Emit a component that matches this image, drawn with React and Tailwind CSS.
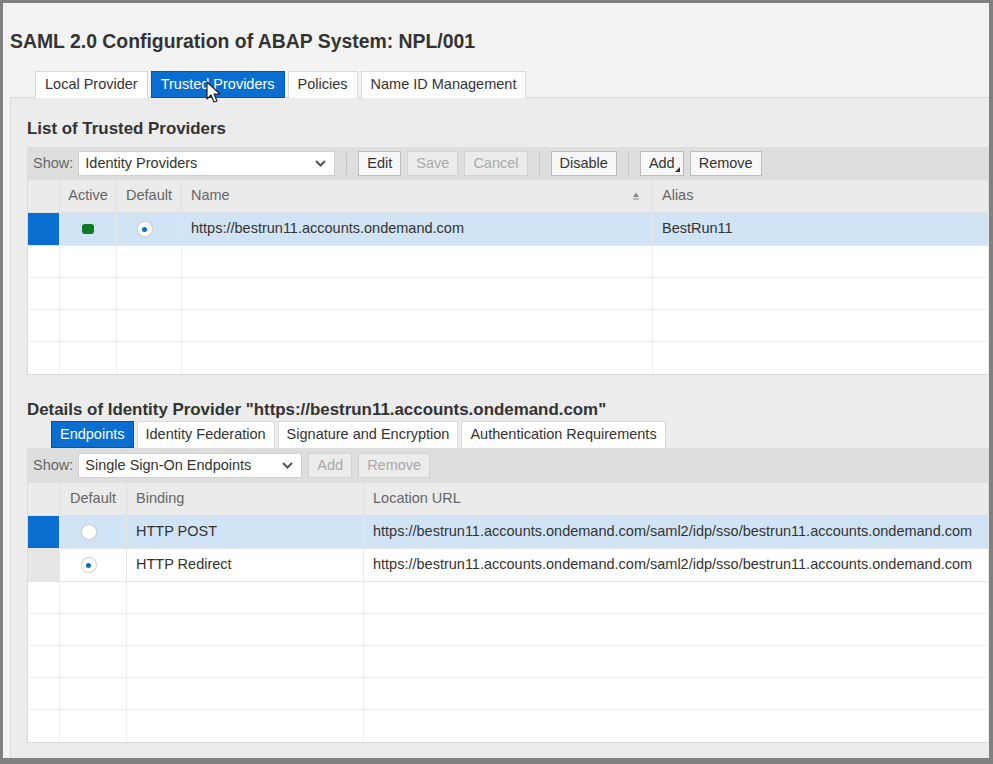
import React from "react"

const font = { fontFamily: '"Liberation Sans", Arial, sans-serif' }

function Tab({ label, active, pad = "px-[9px]" }) {
  return (
    <div
      className={`h-[27px] ${pad} flex items-center border text-[14.5px] ${active ? "bg-[#0a6ed1] border-[#0854a0] text-white" : "bg-white border-[#d9d9d9] border-b-0 text-[#333]"}`}
    >
      {label}
    </div>
  )
}

function Btn({ label, disabled, menu }) {
  return (
    <div
      className={`relative h-[25px] px-[8px] flex items-center border text-[14.5px] ${disabled ? "bg-[#ececec] border-[#d3d3d3] text-[#a9a9a9]" : "bg-[#f7f7f7] border-[#bdbdbd] text-[#333]"}`}
    >
      {label}
      {menu && (
        <svg className="absolute right-[3px] bottom-[3px]" width="5" height="5" viewBox="0 0 5 5">
          <path d="M5 0 L5 5 L0 5 Z" fill="#333" />
        </svg>
      )}
    </div>
  )
}

function Sep() {
  return <div className="w-px h-[22px] bg-[#c4c4c4] mx-[5px]" />
}

function Select({ label, width }) {
  return (
    <div className={`h-[25px] bg-white border border-[#cfcfcf] flex items-center justify-between pl-[6px] pr-[8px] text-[14.5px] text-[#333] ${width}`}>
      <span>{label}</span>
      <svg width="11" height="7" viewBox="0 0 11 7">
        <path d="M1 1 L5.5 5.5 L10 1" fill="none" stroke="#555" strokeWidth="2" />
      </svg>
    </div>
  )
}

function Radio({ checked }) {
  return (
    <div className="w-[16px] h-[16px] rounded-full bg-white border border-[#d6d6d6] flex items-center justify-center shadow-[0_0_1px_rgba(0,0,0,0.15)]">
      {checked && <div className="w-[5px] h-[5px] rounded-full bg-[#0a6ed1]" />}
    </div>
  )
}

function Active() {
  return <div className="w-[12px] h-[10px] rounded-[3px] bg-[#0b7a22]" />
}

function SortIcon() {
  return (
    <svg width="8" height="8" viewBox="0 0 8 8">
      <path d="M4 0.5 L7 5 L1 5 Z" fill="#8a8a8a" />
      <rect x="1" y="6.5" width="6" height="1" fill="#8a8a8a" />
    </svg>
  )
}

function Table({ cols, rows, total }) {
  const blanks = Array.from({ length: total - rows.length })
  return (
    <div className="bg-white border-l border-b border-[#dcdcdc]">
      <div className="flex h-[33px] bg-[#ebebeb] border-b border-[#dedede] text-[14.5px] text-[#666]">
        <div className="w-[32px] shrink-0 border-r border-[#dedede]" />
        {cols.map((c, i) => (
          <div
            key={i}
            className={`${c.w} h-full flex items-center border-r border-[#dedede] ${c.center ? "justify-center" : "pl-[9px] pr-[12px] justify-between"}`}
          >
            <span>{c.label}</span>
            {c.sort && <SortIcon />}
          </div>
        ))}
      </div>
      {rows.map((r, i) => (
        <div key={i} className={`flex h-[33px] border-b border-[#e6e6e6] text-[14.5px] text-[#333] ${r.selected ? "bg-[#d1e4f6]" : "bg-white"}`}>
          <div className={`w-[32px] shrink-0 border-r border-[#e6e6e6] ${r.selected ? "bg-[#0a6ed1]" : "bg-[#e6e6e6]"}`} />
          {r.cells.map((cell, j) => (
            <div
              key={j}
              className={`${cols[j].w} h-full flex items-center border-r border-[#e6e6e6] whitespace-nowrap ${cols[j].center ? "justify-center" : "pl-[9px]"} ${cols[j].cellPad || ""}`}
            >
              {cell}
            </div>
          ))}
        </div>
      ))}
      {blanks.map((_, i) => (
        <div key={i} className="flex h-[32px] border-b border-[#ededed] last:border-b-0">
          <div className="w-[32px] shrink-0 border-r border-[#ededed]" />
          {cols.map((c, j) => (
            <div key={j} className={`${c.w} h-full border-r border-[#ededed]`} />
          ))}
        </div>
      ))}
    </div>
  )
}

export default function App() {
  const providerCols = [
    { label: "Active", w: "w-[57px] shrink-0", center: true },
    { label: "Default", w: "w-[65px] shrink-0", center: true, cellPad: "pr-[9px]" },
    { label: "Name", w: "w-[471px] shrink-0", sort: true },
    { label: "Alias", w: "flex-1" },
  ]
  const endpointCols = [
    { label: "Default", w: "w-[67px] shrink-0", center: true, cellPad: "pr-[9px]" },
    { label: "Binding", w: "w-[237px] shrink-0" },
    { label: "Location URL", w: "flex-1" },
  ]
  const url = "https://bestrun11.accounts.ondemand.com/saml2/idp/sso/bestrun11.accounts.ondemand.com"

  return (
    <div className="w-[993px] h-[764px] bg-[#808080] pt-[3px] pl-[3px] pr-[4px] pb-[6px]" style={font}>
      <div className="relative w-full h-full bg-[#f3f3f3] overflow-hidden flex flex-col pl-[7px]">
        <h1 className="pt-[26px] text-[19.4px] leading-[24px] font-bold text-[#333]">
          SAML 2.0 Configuration of ABAP System: NPL/001
        </h1>
        <div className="flex gap-[3px] ml-[25px] mt-[18px] -mb-px relative z-10 items-end">
          <Tab label="Local Provider" />
          <Tab label="Trusted Providers" active />
          <Tab label="Policies" />
          <Tab label="Name ID Management" />
        </div>

        <div className="flex-1 bg-[#ececec] border-t border-l border-[#d9d9d9] pl-[16px]">
          <h2 className="pt-[21px] text-[16.9px] leading-[20px] font-bold text-[#333]">List of Trusted Providers</h2>
          <div className="mt-[8px] h-[33px] bg-[#dedede] flex items-center pl-[6px] gap-[6px]">
            <span className="text-[14.5px] text-[#666] mr-[-1px]">Show:</span>
            <Select label="Identity Providers" width="w-[257px]" />
            <Sep />
            <Btn label="Edit" />
            <Btn label="Save" disabled />
            <Btn label="Cancel" disabled />
            <Sep />
            <Btn label="Disable" />
            <Sep />
            <Btn label="Add" menu />
            <Btn label="Remove" />
          </div>
          <Table
            cols={providerCols}
            total={5}
            rows={[
              {
                selected: true,
                cells: [<Active />, <Radio checked />, "https://bestrun11.accounts.ondemand.com", "BestRun11"],
              },
            ]}
          />

          <h2 className="mt-[25px] text-[16.9px] leading-[20px] font-bold text-[#333]">
            Details of Identity Provider "https://bestrun11.accounts.ondemand.com"
          </h2>
          <div className="flex gap-[3px] ml-[24px] mt-[1px]">
            <Tab label="Endpoints" active pad="px-[8px]" />
            <Tab label="Identity Federation" pad="px-[8px]" />
            <Tab label="Signature and Encryption" pad="px-[8px]" />
            <Tab label="Authentication Requirements" pad="px-[8px]" />
          </div>
          <div className="h-[35px] bg-[#dedede] flex items-center pl-[6px] gap-[6px]">
            <span className="text-[14.5px] text-[#666] mr-[-1px]">Show:</span>
            <Select label="Single Sign-On Endpoints" width="w-[224px]" />
            <Btn label="Add" disabled />
            <Btn label="Remove" disabled />
          </div>
          <Table
            cols={endpointCols}
            total={7}
            rows={[
              { selected: true, cells: [<Radio />, "HTTP POST", url] },
              { selected: false, cells: [<Radio checked />, "HTTP Redirect", url] },
            ]}
          />
        </div>

        <svg className="absolute left-[203px] top-[78px] z-20" width="16" height="24" viewBox="0 0 16 24">
          <path d="M1 1 L1 18 L5 14 L8 21 L11 20 L8 13 L14 13 Z" fill="white" stroke="#222" strokeWidth="1.2" strokeLinejoin="round" />
        </svg>
      </div>
    </div>
  )
}
